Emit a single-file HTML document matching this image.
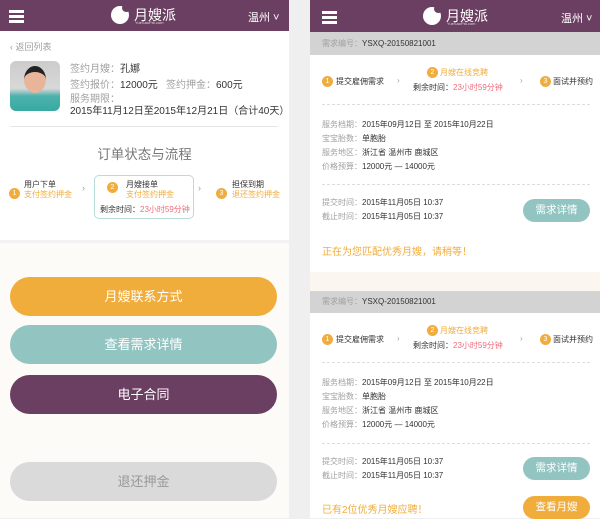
<!DOCTYPE html>
<html><head><meta charset="utf-8"><style>
*{margin:0;padding:0;box-sizing:border-box}
body{width:600px;height:518px;overflow:hidden;background:#efefef;font-family:"Liberation Sans","Noto Sans CJK SC",sans-serif;position:relative;color:#333}
.a{position:absolute;white-space:nowrap}
.hd{position:absolute;top:0;height:31px;background:#6b3f61}
.burger{position:absolute;width:15px;height:2.5px;background:#fff}
.g{color:#a0a0a0}
.o{color:#f0ad3c}
.r{color:#f06b7a}
.c{width:11px;height:11px;border-radius:50%;background:#f0ad3c;color:#fff;font-size:7px;text-align:center;line-height:11px;display:inline-block}
.btn{position:absolute;left:10px;width:267px;height:39px;border-radius:20px;color:#fff;font-size:13px;text-align:center;line-height:39px}
.sb{position:absolute;width:67px;height:23px;border-radius:12px;color:#fff;font-size:10.5px;text-align:center;line-height:23px}
.dash{position:absolute;left:322px;width:268px;border-top:1px dashed #ddd}
.f10{font-size:10px}.f8{font-size:8px}
</style></head><body>
<!-- left panel -->
<div class="a" style="left:0;top:0;width:289px;height:518px;background:#fff"></div>
<div class="a" style="left:0;top:243px;width:289px;height:275px;background:#fdfbf7"></div>
<div class="a" style="left:0;top:240px;width:289px;height:3px;background:#f2f2f2"></div>
<div class="hd" style="left:0;width:289px"></div>
<div class="burger" style="left:9px;top:10px"></div><div class="burger" style="left:9px;top:15px"></div><div class="burger" style="left:9px;top:20px"></div>
<div class="a" style="left:111px;top:6px;width:18px;height:18px;border-radius:50%;background:#fff"></div>
<div class="a" style="left:122px;top:4px;width:9px;height:8px;border-radius:50%;background:#6b3f61"></div>
<div class="a" style="left:134px;top:5px;color:#fff;font-size:14px">月嫂派</div>
<div class="a" style="left:135px;top:20px;color:#ddd;font-size:4px">YueSaoPai.com</div>
<div class="a" style="left:248px;top:9px;color:#fff;font-size:11px">温州 ˅</div>
<div class="a g" style="left:10px;top:40px;font-size:9px">‹ 返回列表</div>
<div class="a" style="left:10px;top:61px;width:50px;height:50px;border-radius:6px;background:linear-gradient(#ccc 0,#d8d8d8 55%,#4cb2ad 70%,#3aa8a2 100%)"></div>
<div class="a" style="left:24px;top:66px;width:22px;height:27px;border-radius:50%;background:#e8b59a;border-top:6px solid #222"></div>
<div class="a f10" style="left:70px;top:60px"><span class="g">签约月嫂：</span>孔娜</div>
<div class="a f10" style="left:70px;top:76px"><span class="g">签约报价：</span>12000元</div>
<div class="a f10" style="left:166px;top:76px"><span class="g">签约押金：</span>600元</div>
<div class="a f10 g" style="left:70px;top:90px">服务期限：</div>
<div class="a f10" style="left:70px;top:102px">2015年11月12日至2015年12月21日（合计40天）</div>
<div class="a" style="left:10px;top:126px;width:268px;height:1px;background:#e6e6e6"></div>
<div class="a" style="left:0;top:143px;width:289px;text-align:center;font-size:13.5px;color:#777">订单状态与流程</div>
<div class="a" style="left:94px;top:175px;width:100px;height:44px;border:1px solid #b7dcd9;border-radius:5px"></div>
<div class="a c" style="left:9px;top:188px">1</div>
<div class="a f8" style="left:24px;top:180px;line-height:10px">用户下单<br><span class="o">支付签约押金</span></div>
<div class="a g" style="left:82px;top:183px;font-size:9px">›</div>
<div class="a c" style="left:107px;top:182px">2</div>
<div class="a f8" style="left:126px;top:180px;line-height:10px">月嫂接单<br><span class="o">支付签约押金</span></div>
<div class="a f8" style="left:100px;top:204px">剩余时间：<span class="r">23小时59分钟</span></div>
<div class="a g" style="left:198px;top:183px;font-size:9px">›</div>
<div class="a c" style="left:216px;top:188px">3</div>
<div class="a f8" style="left:232px;top:180px;line-height:10px">担保到期<br><span class="o">退还签约押金</span></div>
<div class="btn" style="top:277px;background:#f0ad3c">月嫂联系方式</div>
<div class="btn" style="top:325px;background:#92c4c1">查看需求详情</div>
<div class="btn" style="top:375px;background:#6b3f61">电子合同</div>
<div class="btn" style="top:462px;background:#dadada;color:#999">退还押金</div>

<!-- right panel -->
<div class="a" style="left:310px;top:0;width:290px;height:272px;background:#fff"></div>
<div class="a" style="left:310px;top:272px;width:290px;height:20px;background:#fbf6ef"></div>
<div class="a" style="left:310px;top:313px;width:290px;height:205px;background:#fff"></div>
<div class="hd" style="left:310px;width:290px;height:32px"></div>
<div class="burger" style="left:322px;top:11px"></div><div class="burger" style="left:322px;top:16px"></div><div class="burger" style="left:322px;top:21px"></div>
<div class="a" style="left:423px;top:7px;width:18px;height:18px;border-radius:50%;background:#fff"></div>
<div class="a" style="left:434px;top:5px;width:9px;height:8px;border-radius:50%;background:#6b3f61"></div>
<div class="a" style="left:446px;top:6px;color:#fff;font-size:14px">月嫂派</div>
<div class="a" style="left:447px;top:21px;color:#ddd;font-size:4px">YueSaoPai.com</div>
<div class="a" style="left:561px;top:10px;color:#fff;font-size:11px">温州 ˅</div>

<div class="a" style="left:310px;top:32px;width:290px;height:23px;background:#d3d3d3"></div>
<div class="a f8" style="left:322px;top:38px"><span class="g">需求编号：</span>YSXQ-20150821001</div>
<div class="a c" style="left:322px;top:76px">1</div>
<div class="a f8" style="left:336px;top:76px">提交雇佣需求</div>
<div class="a g f8" style="left:397px;top:76px">›</div>
<div class="a c" style="left:427px;top:67px">2</div>
<div class="a f8 o" style="left:440px;top:67px">月嫂在线竞聘</div>
<div class="a f8" style="left:413px;top:82px">剩余时间：<span class="r">23小时59分钟</span></div>
<div class="a g f8" style="left:520px;top:76px">›</div>
<div class="a c" style="left:540px;top:76px">3</div>
<div class="a f8" style="left:553px;top:76px">面试并预约</div>
<div class="dash" style="top:104px"></div>
<div class="a f8" style="left:322px;top:118px;line-height:14px"><span class="g">服务档期：</span>2015年09月12日 至 2015年10月22日<br><span class="g">宝宝胎数：</span>单胞胎<br><span class="g">服务地区：</span>浙江省 温州市 鹿城区<br><span class="g">价格预算：</span>12000元 — 14000元</div>
<div class="dash" style="top:184px"></div>
<div class="a f8" style="left:322px;top:196px;line-height:14px"><span class="g">提交时间：</span>2015年11月05日 10:37<br><span class="g">截止时间：</span>2015年11月05日 10:37</div>
<div class="sb" style="left:523px;top:199px;background:#92c4c1">需求详情</div>
<div class="a o" style="left:322px;top:243px;font-size:10px">正在为您匹配优秀月嫂，请稍等！</div>

<div class="a" style="left:310px;top:291px;width:290px;height:22px;background:#d3d3d3"></div>
<div class="a f8" style="left:322px;top:296px"><span class="g">需求编号：</span>YSXQ-20150821001</div>
<div class="a c" style="left:322px;top:334px">1</div>
<div class="a f8" style="left:336px;top:334px">提交雇佣需求</div>
<div class="a g f8" style="left:397px;top:334px">›</div>
<div class="a c" style="left:427px;top:325px">2</div>
<div class="a f8 o" style="left:440px;top:325px">月嫂在线竞聘</div>
<div class="a f8" style="left:413px;top:340px">剩余时间：<span class="r">23小时59分钟</span></div>
<div class="a g f8" style="left:520px;top:334px">›</div>
<div class="a c" style="left:540px;top:334px">3</div>
<div class="a f8" style="left:553px;top:334px">面试并预约</div>
<div class="dash" style="top:362px"></div>
<div class="a f8" style="left:322px;top:376px;line-height:14px"><span class="g">服务档期：</span>2015年09月12日 至 2015年10月22日<br><span class="g">宝宝胎数：</span>单胞胎<br><span class="g">服务地区：</span>浙江省 温州市 鹿城区<br><span class="g">价格预算：</span>12000元 — 14000元</div>
<div class="dash" style="top:443px"></div>
<div class="a f8" style="left:322px;top:455px;line-height:14px"><span class="g">提交时间：</span>2015年11月05日 10:37<br><span class="g">截止时间：</span>2015年11月05日 10:37</div>
<div class="sb" style="left:523px;top:457px;background:#92c4c1">需求详情</div>
<div class="a o" style="left:322px;top:501px;font-size:10px">已有2位优秀月嫂应聘！</div>
<div class="sb" style="left:523px;top:496px;background:#f0ad3c">查看月嫂</div>
</body></html>
